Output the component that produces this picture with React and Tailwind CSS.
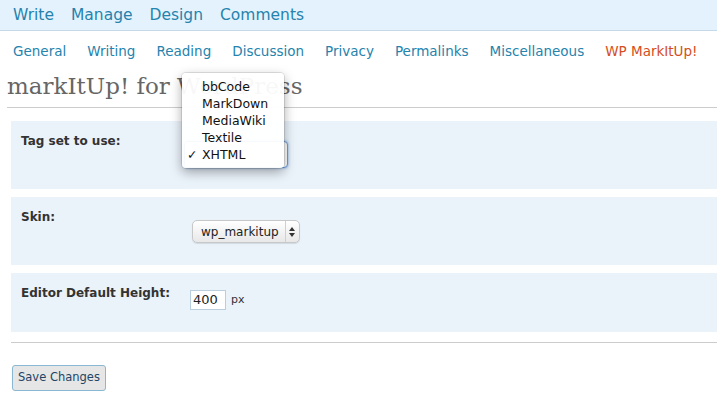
import React from 'react';

const tabs = ['General', 'Writing', 'Reading', 'Discussion', 'Privacy', 'Permalinks', 'Miscellaneous'];
const tagSets = ['bbCode', 'MarkDown', 'MediaWiki', 'Textile', 'XHTML'];

function Row({ label, children, h }) {
    return (
        <div className={`flex bg-[#eaf2fa] ${h}`}>
            <div className="w-[181px] pl-[10px] pt-[11px] text-[12px] font-bold text-[#333]">{label}</div>
            <div>{children}</div>
        </div>
    );
}

export default function App() {
    return (
        <div className="relative h-[407px] w-[717px] overflow-hidden bg-white font-['DejaVu_Sans',sans-serif]">
            {/* top menu */}
            <div className="flex h-[31px] items-center gap-[17px] border-b border-[#c6d9e9] bg-[#e4f2fd] pl-[13px] pt-[2px] text-[15.5px] text-[#2583ad]">
                <span>Write</span>
                <span>Manage</span>
                <span>Design</span>
                <span>Comments</span>
            </div>

            {/* submenu */}
            <div className="flex gap-[21px] pl-[13px] pt-[10px] text-[13.5px] text-[#2583ad]">
                {tabs.map(t => <span key={t}>{t}</span>)}
                <span className="text-[#d54e21]">WP MarkItUp!</span>
            </div>

            <div className="pl-[7px]">
                <h2 className="border-b border-[#cccccc] pb-[6px] pt-[10px] font-['DejaVu_Serif',serif] text-[23px] leading-[30px] text-[#666]">
                    markItUp! for WordPress
                </h2>
            </div>

            <div className="flex flex-col gap-[8px] pl-[11px] pt-[13px]">
                <Row label="Tag set to use:" h="h-[68px]">
                    <div className="ml-[-8px] mt-[20px] h-[27px] w-[104px] rounded-[4px] border border-[#6d9cd6] bg-white shadow-[0_0_3px_#7aa7e0]"></div>
                </Row>
                <Row label="Skin:" h="h-[68px]">
                    <div className="mt-[23px] flex h-[23px] items-center rounded-[5px] border border-[#c8c8c8] bg-gradient-to-b from-white to-[#e8e8e8] text-[12px] text-[#222] shadow-[0_1px_1px_rgba(0,0,0,0.1)]">
                        <span className="pl-[8px] pr-[6px]">wp_markitup</span>
                        <span className="flex h-full w-[14px] items-center justify-center border-l border-[#cfcfcf]">
                            <svg width="6" height="10" viewBox="0 0 6 10"><path d="M0 4 L3 0 L6 4 Z M0 6 L3 10 L6 6 Z" fill="#333" /></svg>
                        </span>
                    </div>
                </Row>
                <Row label="Editor Default Height:" h="h-[59px]">
                    <div className="ml-[-2px] mt-[17px] flex items-center text-[12px] text-[#222]">
                        <div className="h-[20px] w-[36px] border border-[#b9cfe0] bg-white pl-[2px] text-[13px] leading-[18px]">400</div>
                        <span className="ml-[5px] text-[11px] text-[#333]">px</span>
                    </div>
                </Row>
            </div>

            <div className="ml-[11px] mt-[10px] border-b border-[#cccccc]"></div>

            <div className="pl-[12px] pt-[21px]">
                <button className="h-[26px] rounded-[3px] border border-[#8ab8d4] bg-[#e6e6e6] px-[5px] text-[11.5px] text-[#246]">
                    Save Changes
                </button>
            </div>

            {/* open dropdown menu */}
            <div className="absolute left-[182px] top-[73px] w-[102px] rounded-[4px] bg-white/95 py-[5px] text-[12.5px] leading-[17px] text-[#111] shadow-[0_4px_12px_rgba(0,0,0,0.35)] ring-1 ring-black/10">
                {tagSets.map(t => (
                    <div key={t} className="relative pl-[20px]">
                        {t === 'XHTML' && <span className="absolute left-[5px]">✓</span>}
                        {t}
                    </div>
                ))}
            </div>
        </div>
    );
}
